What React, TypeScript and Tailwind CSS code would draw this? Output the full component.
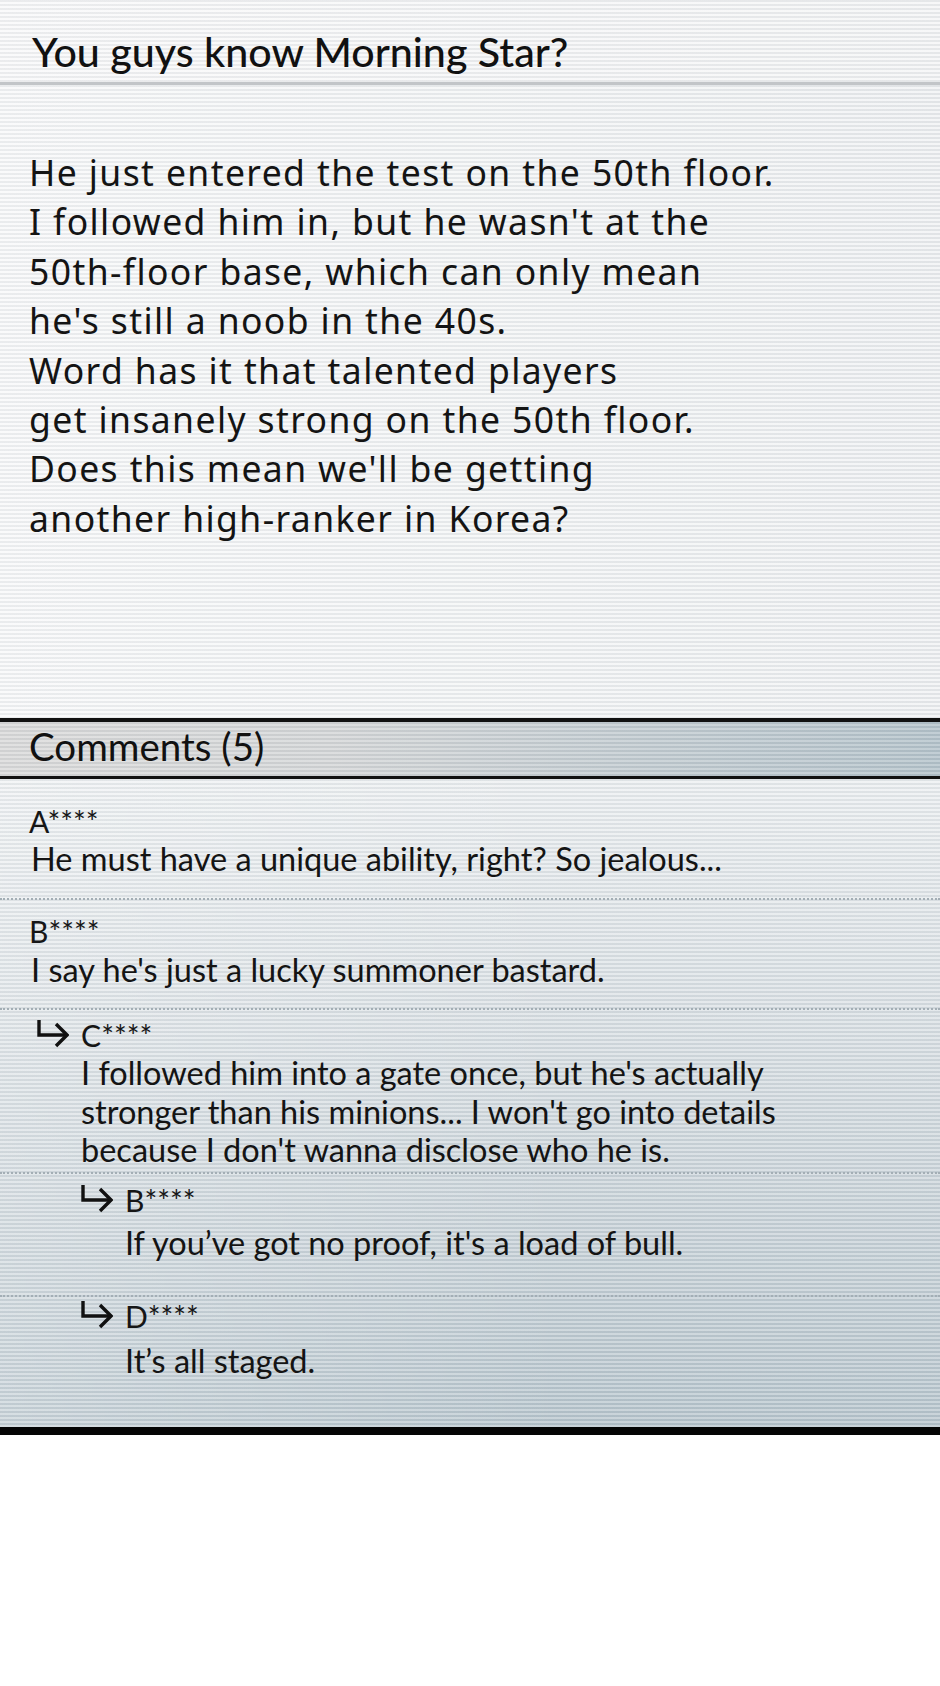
import React from 'react';

type Comment = {
  name: string;
  lines: string[];
  depth: 0 | 1 | 2;
  box: string;
  gap: string;
};

const comments: Comment[] = [
  {
    name: 'A****',
    lines: ['He must have a unique ability, right? So jealous...'],
    depth: 0,
    box: 'pt-[26px] pb-[19px]',
    gap: 'mt-[3px]',
  },
  {
    name: 'B****',
    lines: ["I say he's just a lucky summoner bastard."],
    depth: 0,
    box: 'pt-[15px] pb-[19px]',
    gap: 'mt-[4px]',
  },
  {
    name: 'C****',
    lines: [
      "I followed him into a gate once, but he's actually",
      "stronger than his minions... I won't go into details",
      "because I don't wanna disclose who he is.",
    ],
    depth: 1,
    box: 'pt-[9px] pb-[2px]',
    gap: 'mt-[3px]',
  },
  {
    name: 'B****',
    lines: ["If you’ve got no proof, it's a load of bull."],
    depth: 2,
    box: 'pt-[10px] pb-[33px]',
    gap: 'mt-[8px]',
  },
  {
    name: 'D****',
    lines: ['It’s all staged.'],
    depth: 2,
    box: 'pt-[3px] pb-[46px]',
    gap: 'mt-[10px]',
  },
];

const postLines = [
  'He just entered the test on the 50th floor.',
  "I followed him in, but he wasn't at the",
  '50th-floor base, which can only mean',
  "he's still a noob in the 40s.",
  'Word has it that talented players',
  'get insanely strong on the 50th floor.',
  "Does this mean we'll be getting",
  'another high-ranker in Korea?',
];

function ReplyArrow() {
  return (
    <svg width="32" height="32" viewBox="0 0 32 32" fill="none" className="shrink-0">
      <path d="M2 1V16H30" stroke="#111" strokeWidth="3.4" />
      <path d="M19 5L30 16L19 27" stroke="#111" strokeWidth="3.4" />
    </svg>
  );
}

function CommentItem({ c, last }: { c: Comment; last: boolean }) {
  const indent = c.depth === 0 ? 'pl-[29px]' : c.depth === 1 ? 'pl-[37px]' : 'pl-[81px]';
  return (
    <div
      className={`${indent} ${c.box} ${
        last ? '' : 'border-b-2 border-dotted border-[#a3aeb5]'
      }`}
    >
      <div className="flex items-center h-[32px]">
        {c.depth > 0 && <ReplyArrow />}
        <span className={`text-[30px] leading-[32px] text-[#161616] ${c.depth > 0 ? 'ml-[12px]' : ''}`}>
          {c.name}
        </span>
      </div>
      <div className={`${c.depth > 0 ? 'pl-[44px]' : 'pl-[2px]'} ${c.gap} text-[32.5px] leading-[38.5px] text-[#141414]`}>
        {c.lines.map((l, i) => (
          <p key={i}>{l}</p>
        ))}
      </div>
    </div>
  );
}

export default function App() {
  return (
    <div className="min-h-[1686px] w-[940px] bg-white font-['Lato','Liberation_Sans',sans-serif]">
      {/* post title */}
      <div className="h-[85px] pt-[27px] pl-[32px] border-b-[3px] border-[#c2c5c8] bg-[image:repeating-linear-gradient(180deg,rgba(110,120,130,0.09)_0px,rgba(110,120,130,0.09)_2px,rgba(255,255,255,0.4)_2px,rgba(255,255,255,0.4)_4px),linear-gradient(90deg,#f7f7f8,#f1f2f3)]">
        <h1 className="text-[41.2px] leading-[48px] font-medium text-[#111]">You guys know Morning Star?</h1>
      </div>

      {/* post body */}
      <div className="h-[633px] pt-[63px] pl-[29px] font-['Noto_Sans',sans-serif] text-[35.5px] leading-[49.4px] tracking-[1.4px] text-[#141414] bg-[image:repeating-linear-gradient(180deg,rgba(110,120,130,0.09)_0px,rgba(110,120,130,0.09)_2px,rgba(255,255,255,0.4)_2px,rgba(255,255,255,0.4)_4px),linear-gradient(90deg,#f6f7f8,#f0f2f3_60%,#eceef0)]">
        {postLines.map((l, i) => (
          <p key={i}>{l}</p>
        ))}
      </div>

      {/* comments header */}
      <div className="h-[61px] border-t-4 border-b-[3px] border-[#111] pt-[2px] pl-[29px] bg-[image:repeating-linear-gradient(180deg,rgba(90,100,110,0.08)_0px,rgba(90,100,110,0.08)_2px,rgba(255,255,255,0.2)_2px,rgba(255,255,255,0.2)_4px),linear-gradient(90deg,#dadada,#d4d6d7_35%,#c3ccd1_65%,#b3c2ca)]">
        <h2 className="text-[38.5px] leading-[44px] text-[#111]">Comments (5)</h2>
      </div>

      {/* comment list */}
      <div className="bg-[image:repeating-linear-gradient(180deg,rgba(90,105,115,0.09)_0px,rgba(90,105,115,0.09)_2px,rgba(255,255,255,0.25)_2px,rgba(255,255,255,0.25)_4px),linear-gradient(90deg,rgba(255,255,255,0.25),rgba(255,255,255,0)_60%),linear-gradient(180deg,#eceff1,#dbe1e5_35%,#c8d2d8_70%,#b7c5cd)]">
        {comments.map((c, i) => (
          <CommentItem key={i} c={c} last={i === comments.length - 1} />
        ))}
      </div>
      <div className="h-[8px] bg-[#050505]" />
    </div>
  );
}
